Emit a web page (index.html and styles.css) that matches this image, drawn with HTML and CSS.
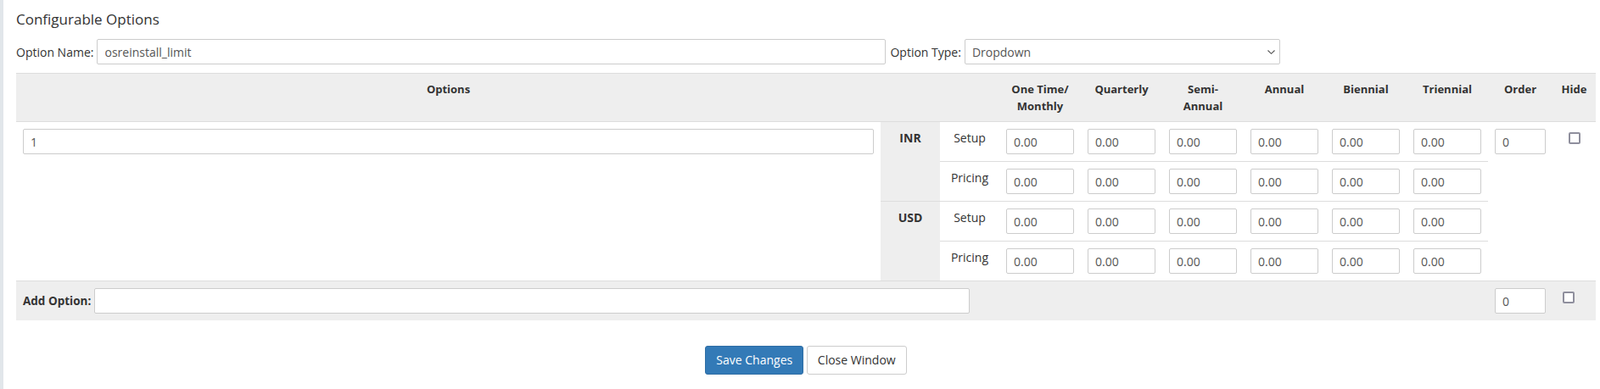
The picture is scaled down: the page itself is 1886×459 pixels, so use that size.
FILE: index.html
```html
<!DOCTYPE html>
<html lang="en">
<head>
    <meta charset="UTF-8">
    <meta name="viewport" content="width=device-width, initial-scale=1.0">
    <title>Configurable Options</title>
    <link rel="stylesheet" href="styles.css">
</head>
<body>
    <div class="content">
        <h2 class="title">Configurable Options</h2>
        <div class="option-row">
            <label class="row-label">Option Name:</label>
            <input type="text" class="field name-field" value="osreinstall_limit">
            <label class="row-label">Option Type:</label>
            <span class="select-wrap">
                <select class="field type-field">
                    <option>Dropdown</option>
                    <option>Radio</option>
                    <option>Yes/No</option>
                    <option>Quantity</option>
                </select>
                <svg class="chevron" width="9" height="5" viewBox="0 0 9 5"><path d="M0.5 0.5 L4.5 4.3 L8.5 0.5" fill="none" stroke="#555" stroke-width="1.1"/></svg>
            </span>
        </div>

        <table class="options-table">
            <colgroup>
                <col class="col-option">
                <col class="col-currency">
                <col class="col-type">
                <col class="col-price">
                <col class="col-price">
                <col class="col-price">
                <col class="col-price">
                <col class="col-price">
                <col class="col-price">
                <col class="col-order">
                <col class="col-hide">
            </colgroup>
            <thead>
                <tr>
                    <th>Options</th>
                    <th colspan="2"></th>
                    <th>One Time/<br>Monthly</th>
                    <th>Quarterly</th>
                    <th>Semi-<br>Annual</th>
                    <th>Annual</th>
                    <th>Biennial</th>
                    <th>Triennial</th>
                    <th>Order</th>
                    <th>Hide</th>
                </tr>
            </thead>
            <tbody>
                <tr>
                    <td rowspan="4"><input type="text" class="field" value="1"></td>
                    <td rowspan="2" class="currency">INR</td>
                    <td class="price-type">Setup</td>
                    <td><input type="text" class="field" value="0.00"></td>
                    <td><input type="text" class="field" value="0.00"></td>
                    <td><input type="text" class="field" value="0.00"></td>
                    <td><input type="text" class="field" value="0.00"></td>
                    <td><input type="text" class="field" value="0.00"></td>
                    <td><input type="text" class="field" value="0.00"></td>
                    <td rowspan="4"><input type="text" class="field" value="0"></td>
                    <td rowspan="4" class="hide-cell"><input type="checkbox" class="check"></td>
                </tr>
                <tr>
                    <td class="price-type">Pricing</td>
                    <td><input type="text" class="field" value="0.00"></td>
                    <td><input type="text" class="field" value="0.00"></td>
                    <td><input type="text" class="field" value="0.00"></td>
                    <td><input type="text" class="field" value="0.00"></td>
                    <td><input type="text" class="field" value="0.00"></td>
                    <td><input type="text" class="field" value="0.00"></td>
                </tr>
                <tr>
                    <td rowspan="2" class="currency">USD</td>
                    <td class="price-type">Setup</td>
                    <td><input type="text" class="field" value="0.00"></td>
                    <td><input type="text" class="field" value="0.00"></td>
                    <td><input type="text" class="field" value="0.00"></td>
                    <td><input type="text" class="field" value="0.00"></td>
                    <td><input type="text" class="field" value="0.00"></td>
                    <td><input type="text" class="field" value="0.00"></td>
                </tr>
                <tr>
                    <td class="price-type">Pricing</td>
                    <td><input type="text" class="field" value="0.00"></td>
                    <td><input type="text" class="field" value="0.00"></td>
                    <td><input type="text" class="field" value="0.00"></td>
                    <td><input type="text" class="field" value="0.00"></td>
                    <td><input type="text" class="field" value="0.00"></td>
                    <td><input type="text" class="field" value="0.00"></td>
                </tr>
                <tr class="add-row">
                    <td colspan="9">
                        <div class="add-option">
                            <label>Add Option:</label>
                            <input type="text" class="field add-field">
                        </div>
                    </td>
                    <td><input type="text" class="field" value="0"></td>
                    <td><input type="checkbox" class="check add-check"></td>
                </tr>
            </tbody>
        </table>

        <div class="actions">
            <button class="btn btn-primary">Save Changes</button>
            <button class="btn btn-default">Close Window</button>
        </div>
    </div>
</body>
</html>
```

FILE: styles.css
```css
body {
    margin: 0;
    min-height: 100vh;
    border-left: 4px solid #e1e6ea;
    font-family: "Open Sans", sans-serif;
    font-size: 14px;
    line-height: 21px;
    color: #333;
    background: #fff;
}
.content {
    padding: 0 5px 0 15px;
}
.title {
    margin: 0 0 11px;
    padding-top: 11px;
    font-size: 17px;
    line-height: 24px;
    font-weight: normal;
    color: #333;
}
.option-row {
    display: flex;
    align-items: center;
    height: 30px;
    margin-bottom: 10px;
}
.row-label {
    margin-right: 4px;
}
.field {
    box-sizing: border-box;
    width: 100%;
    height: 30px;
    padding: 4px 8px;
    border: 1px solid #ccc;
    border-radius: 2px;
    font-family: "Open Sans", sans-serif;
    font-size: 14px;
    color: #555;
    background: #fff;
    outline: none;
}
.name-field {
    width: 930px;
    margin-right: 5px;
}
.select-wrap {
    position: relative;
    display: inline-block;
}
.type-field {
    width: 372px;
    -webkit-appearance: none;
    appearance: none;
}
.chevron {
    position: absolute;
    right: 6px;
    top: 13px;
    pointer-events: none;
}
.options-table {
    width: 1862px;
    table-layout: fixed;
    border-collapse: separate;
    border-spacing: 0;
}
.col-option { width: 1019px; }
.col-currency { width: 70px; }
.col-type { width: 70px; }
.col-price { width: 96px; }
.col-order { width: 76px; }
.col-hide { width: 51px; }
.options-table th {
    padding: 8px;
    background: #eee;
    border-top: 1px solid #ddd;
    font-size: 13px;
    line-height: 20px;
    font-weight: bold;
    text-align: center;
    vertical-align: top;
}
.options-table td {
    padding: 8px;
    border-top: 1px solid #ddd;
    vertical-align: top;
}
.currency {
    background: #eee;
    font-weight: bold;
    text-align: center;
}
.price-type {
    text-align: center;
}
.hide-cell {
    text-align: center;
}
.check {
    -webkit-appearance: none;
    appearance: none;
    box-sizing: border-box;
    width: 14px;
    height: 14px;
    margin: 4px 0 0;
    border: 2px solid #8f8f9d;
    border-radius: 2px;
    background: #fff;
    vertical-align: top;
}
.add-check {
    margin-left: 4px;
}
.add-row td {
    background: #eee;
}
.add-option {
    display: flex;
    align-items: center;
    gap: 4px;
    font-size: 13.5px;
    font-weight: bold;
}
.add-field {
    width: 1032px;
}
.actions {
    margin-top: 30px;
    text-align: center;
}
.btn {
    height: 34px;
    padding: 6px 12px;
    border: 1px solid #ccc;
    border-radius: 3px;
    font-family: "Open Sans", sans-serif;
    font-size: 14px;
    line-height: 20px;
    cursor: pointer;
}
.btn-primary {
    background: #337ab7;
    border-color: #2e6da4;
    color: #fff;
}
.btn-default {
    background: #fff;
    color: #333;
}
```
